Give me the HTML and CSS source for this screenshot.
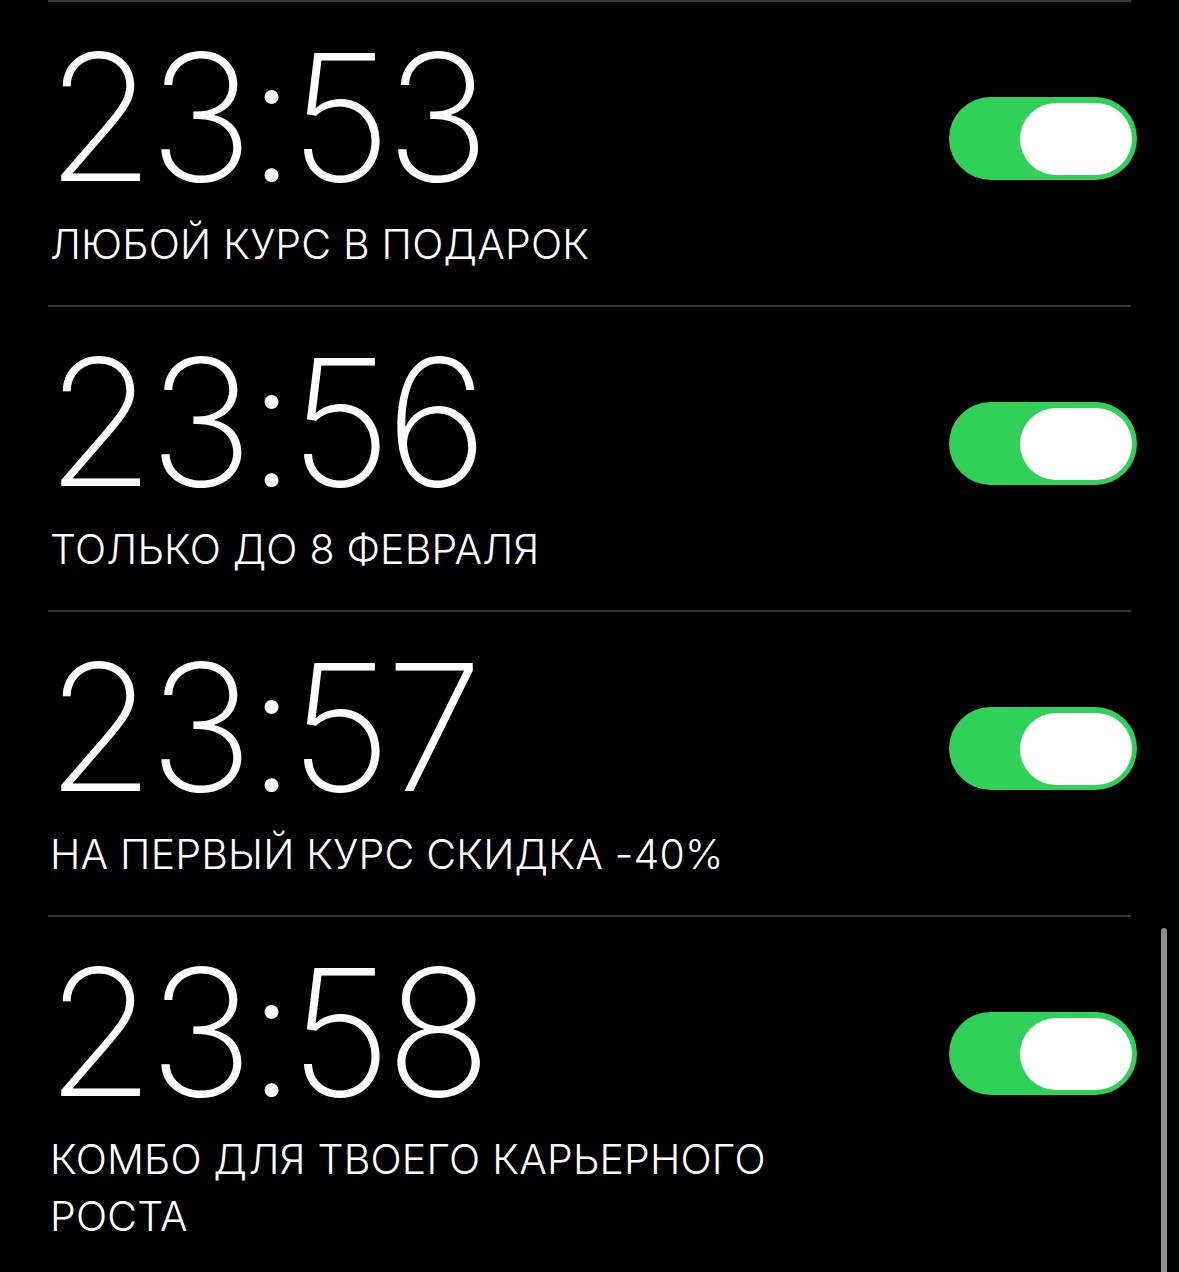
FILE: index.html
```html
<!DOCTYPE html>
<html lang="ru">
<head>
<meta charset="utf-8">
<link rel="stylesheet" href="styles.css">
</head>
<body>
<div class="screen">
  <ul class="alarms">
    <li class="alarm">
      <div class="main">
        <div class="time">23:53</div>
        <div class="label">ЛЮБОЙ КУРС В ПОДАРОК</div>
      </div>
      <div class="toggle"><span class="knob"></span></div>
    </li>
    <li class="alarm">
      <div class="main">
        <div class="time">23:56</div>
        <div class="label">ТОЛЬКО ДО 8 ФЕВРАЛЯ</div>
      </div>
      <div class="toggle"><span class="knob"></span></div>
    </li>
    <li class="alarm">
      <div class="main">
        <div class="time">23:57</div>
        <div class="label">НА ПЕРВЫЙ КУРС СКИДКА -40%</div>
      </div>
      <div class="toggle"><span class="knob"></span></div>
    </li>
    <li class="alarm">
      <div class="main">
        <div class="time">23:58</div>
        <div class="label">КОМБО ДЛЯ ТВОЕГО КАРЬЕРНОГО<br>РОСТА</div>
      </div>
      <div class="toggle"><span class="knob"></span></div>
    </li>
  </ul>
  <div class="scrollbar"></div>
</div>
</body>
</html>
```
FILE: styles.css
```css
html, body {
  margin: 0;
  padding: 0;
  background: #000;
}
body {
  font-family: Inter, Roboto, "Liberation Sans", sans-serif;
  color: #fff;
}
.screen {
  position: relative;
  width: 1179px;
  height: 1272px;
  overflow: hidden;
  background: #000;
}
.alarms {
  list-style: none;
  margin: 0 0 0 48px;
  padding: 0;
  width: 1083px;
}
.alarm {
  display: flex;
  justify-content: space-between;
  align-items: flex-start;
  border-top: 2px solid #38383a;
  padding: 27px 0 32px 0;
}
.main {
  display: flex;
  flex-direction: column;
  padding-left: 2px;
}
.time {
  font-size: 176px;
  line-height: 176px;
  font-weight: 200;
  letter-spacing: -6px;
  margin-left: -4px;
}
.label {
  margin-top: 11px;
  font-size: 41px;
  line-height: 57px;
  font-weight: 350;
  letter-spacing: 0.2px;
}
.toggle {
  margin-top: 68px;
  margin-right: -6px;
  width: 188px;
  height: 83px;
  border-radius: 42px;
  background: #2fd158;
  display: flex;
  justify-content: flex-end;
  align-items: center;
  padding-right: 5px;
  box-sizing: border-box;
}
.knob {
  width: 112px;
  height: 72px;
  border-radius: 36px;
  background: #fff;
}
.scrollbar {
  position: absolute;
  left: 1161px;
  top: 928px;
  width: 6px;
  height: 360px;
  border-radius: 3px;
  background: #8e8e8e;
}
```
